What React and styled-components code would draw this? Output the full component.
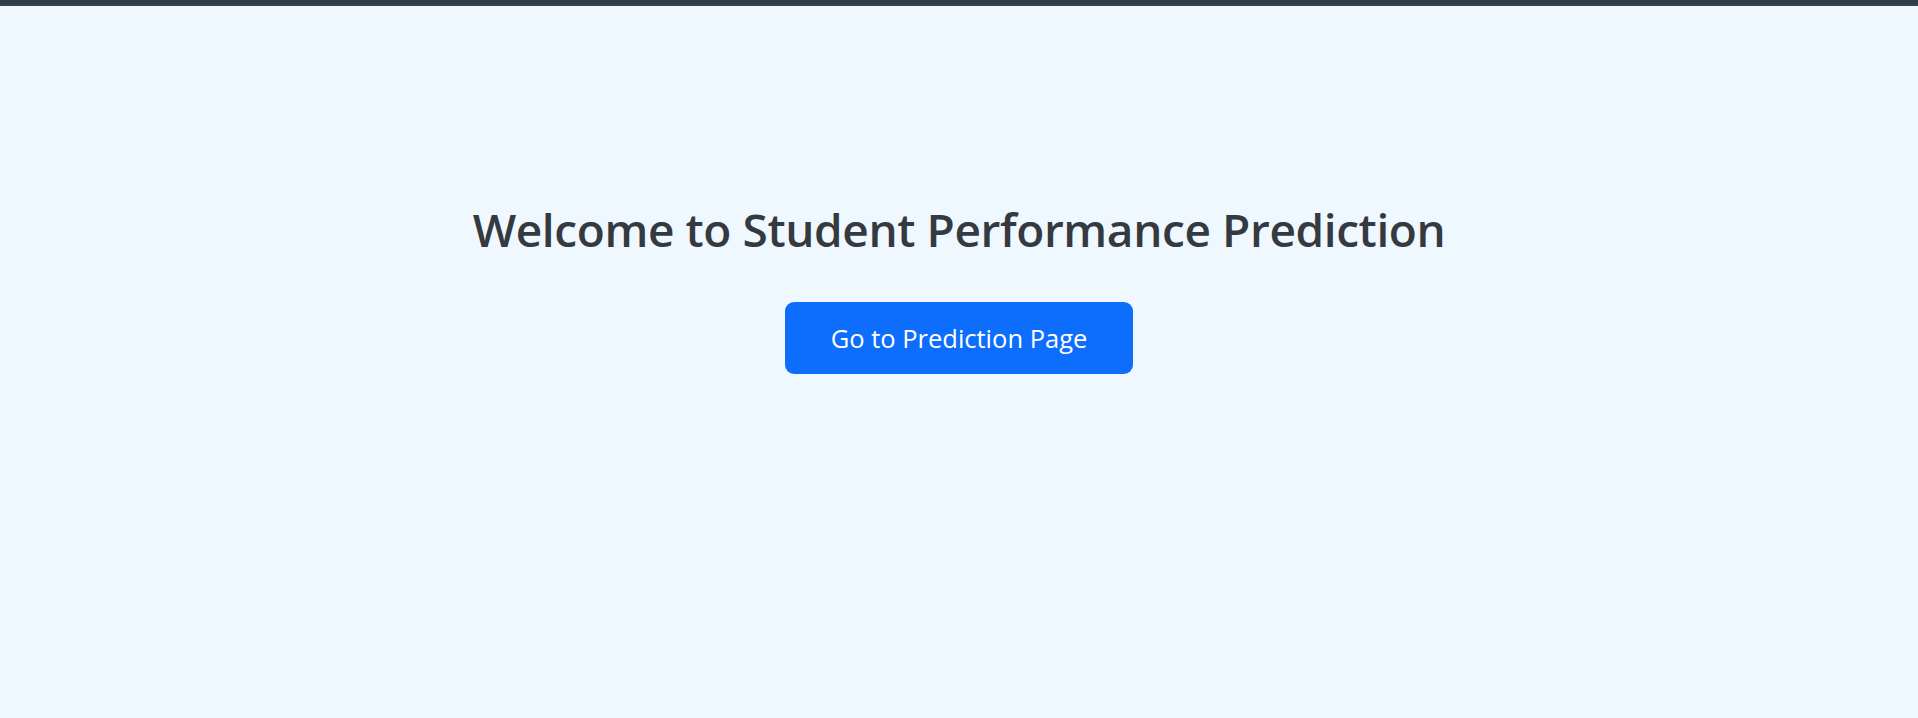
import styled, { createGlobalStyle } from 'styled-components'

const GlobalStyle = createGlobalStyle`
  html, body {
    margin: 0;
    padding: 0;
    background: #f0f8ff;
    font-family: 'Open Sans', 'Noto Sans', sans-serif;
  }
`

const TopBar = styled.div`
  height: 4px;
  background: #2c3e4c;
  border-bottom: 2px solid #3a4148;
`

const Main = styled.main`
  min-height: 712px;
  display: flex;
  flex-direction: column;
  align-items: center;
  padding-top: 196px;
  box-sizing: border-box;
`

const Title = styled.h1`
  margin: 0 0 45px;
  font-size: 46px;
  font-weight: 600;
  line-height: 1.2;
  color: #343a40;
  letter-spacing: -0.4px;
`

const PrimaryButton = styled.button`
  border: none;
  background-color: #0d6efd;
  color: #fff;
  font-family: inherit;
  font-size: 25.5px;
  font-weight: 400;
  line-height: 42px;
  padding: 15px 46px;
  border-radius: 9px;
  cursor: pointer;

  &:hover {
    background-color: #0b5ed7;
  }
`

const App = () => {
  return (
    <>
      <GlobalStyle />
      <TopBar />
      <Main>
        <Title>Welcome to Student Performance Prediction</Title>
        <PrimaryButton>Go to Prediction Page</PrimaryButton>
      </Main>
    </>
  )
}

export default App
